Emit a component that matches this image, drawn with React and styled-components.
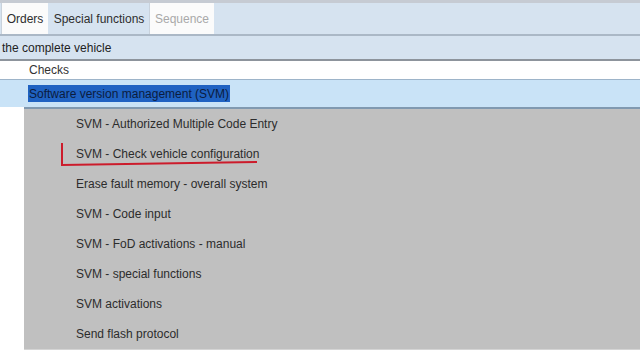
import styled, { createGlobalStyle } from "styled-components";

const GlobalStyle = createGlobalStyle`
  body {
    margin: 0;
    background: #ffffff;
    font-family: "Liberation Sans", Arial, sans-serif;
    font-size: 12px;
    color: #2b2b2b;
  }
`;

const Screen = styled.div`
  position: relative;
  width: 640px;
  height: 360px;
  overflow: hidden;
  background: #ffffff;
`;

const TopStrip = styled.div`
  height: 3px;
  background: #c6cbd3;
`;

const TabBar = styled.div`
  display: flex;
  height: 31px;
  padding-left: 1px;
  background: #d6e3f0;
  border-bottom: 2px solid #abb8c6;
`;

const Tab = styled.div`
  display: flex;
  align-items: center;
  justify-content: center;
  width: ${(p) => p.$w}px;
  background: ${(p) => (p.$white ? "#fbfbfb" : "transparent")};
  border-left: 1px solid ${(p) => (p.$white ? "#c9d2dc" : "transparent")};
  color: ${(p) => (p.$disabled ? "#a9a9a9" : "#2e2e2e")};
`;

const VehicleRow = styled.div`
  display: flex;
  align-items: center;
  height: 23px;
  padding-left: 2px;
  background: #d6e3f0;
  border-bottom: 2px solid #8d949c;
  color: #222;
`;

const ChecksRow = styled.div`
  display: flex;
  align-items: center;
  height: 18px;
  padding-left: 29px;
  background: #ffffff;
  border-bottom: 1px solid #9db4c9;
  color: #333;
`;

const SvmRow = styled.div`
  display: flex;
  align-items: center;
  height: 27px;
  padding-left: 28px;
  background: #c9e3f7;
`;

const Selected = styled.span`
  display: inline-flex;
  align-items: center;
  height: 17px;
  padding: 0 1px;
  background: #1f62c2;
  color: #0b1c3e;
`;

const Panel = styled.div`
  margin-left: 24px;
  background: #c0c0c0;
  border-top: 2px solid #8099b0;
  border-bottom: 1px solid #d4d4d4;
`;

const Item = styled.div`
  display: flex;
  align-items: center;
  height: 30px;
  padding-left: 52px;
  color: #2c2c2c;
`;

const Annotation = styled.svg`
  position: absolute;
  left: 0;
  top: 0;
  pointer-events: none;
`;

const items = [
  "SVM - Authorized Multiple Code Entry",
  "SVM - Check vehicle configuration",
  "Erase fault memory - overall system",
  "SVM - Code input",
  "SVM - FoD activations - manual",
  "SVM - special functions",
  "SVM activations",
  "Send flash protocol",
];

export default function App() {
  return (
    <Screen>
      <GlobalStyle />
      <TopStrip />
      <TabBar>
        <Tab $white $w={46}>Orders</Tab>
        <Tab $w={100}>Special functions</Tab>
        <Tab $white $disabled $w={64}>Sequence</Tab>
      </TabBar>
      <VehicleRow>the complete vehicle</VehicleRow>
      <ChecksRow>Checks</ChecksRow>
      <SvmRow>
        <Selected>Software version management (SVM)</Selected>
      </SvmRow>
      <Panel>
        {items.map((label) => (
          <Item key={label}>{label}</Item>
        ))}
      </Panel>
      {/* red marker under the check entry */}
      <Annotation width="640" height="360">
        <polyline
          points="62,143 62,165 257,162"
          fill="none"
          stroke="#cc1b2b"
          strokeWidth="2"
        />
      </Annotation>
    </Screen>
  );
}
